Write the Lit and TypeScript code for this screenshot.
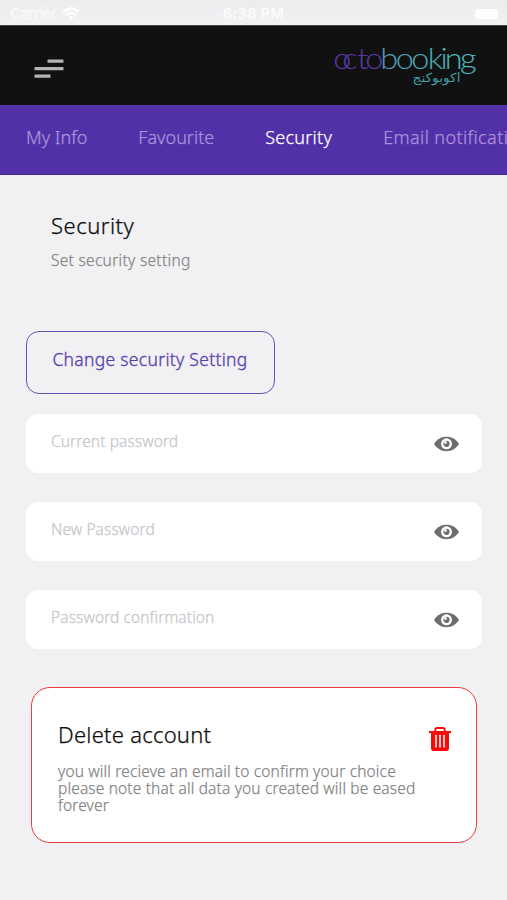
import { LitElement, html, css } from "lit";
import { customElement, property } from "lit/decorators.js";
import { classMap } from "lit/directives/class-map.js";

@customElement("status-bar")
class StatusBar extends LitElement {
  static styles = css`
    :host { display: grid; grid-template-columns: 1fr auto 1fr; align-items: center; box-sizing: border-box;
      height: 25px; padding: 3px 10px 0; background: linear-gradient(#ececee, #f2f2f4); color: #fbfbfc;
      font: 15px/20px "Inter", sans-serif; }
    .carrier { display: flex; align-items: center; gap: 6px; }
    .carrier span { letter-spacing: -0.4px; }
    .time { font-weight: 600; letter-spacing: 0.1px; }
    .battery { justify-self: end; width: 23px; height: 10px; margin-right: -1px; border-radius: 3px; background: #fff; }
    svg { display: block; }
  `;
  render() {
    return html`
      <div class="carrier"><span>Carrier</span>
        <svg width="18" height="14" viewBox="0 0 18 14" fill="none" stroke="#fff" stroke-width="2.6">
          <path d="M1 5 Q9 -2 17 5" /><path d="M4 8 Q9 4 14 8" /><path d="M6.5 10 Q9 8 11.5 10 L9 13Z" fill="#fff" stroke="none" />
        </svg>
      </div>
      <span class="time">6:38 PM</span>
      <span class="battery"></span>`;
  }
}

@customElement("brand-logo")
class BrandLogo extends LitElement {
  static styles = css`
    :host { display: block; }
    svg { display: block; overflow: visible; }
    .latin { font: 300 29px "Lato", sans-serif; }
    .arabic { font: 12.5px "DejaVu Sans", sans-serif; }
    .violet { fill: #5a38a6; }
    .teal { fill: #3f9ea5; }
    .sea { fill: url(#sea); }
  `;
  render() {
    return html`<svg width="144" height="40" viewBox="0 0 144 40">
      <defs><linearGradient id="sea" x1="0" x2="1"><stop stop-color="#5792b4" /><stop offset="0.4" stop-color="#45a9b0" /><stop offset="1" stop-color="#50bfc4" /></linearGradient></defs>
      <g transform="translate(0 23) scale(1.12 1.02)">
        <text class="latin violet" x="-0.7 7.4 20.8 28" y="0">octo</text>
        <text class="latin sea" x="41.2 55.2 69 83.6 95.2 99 112.6" y="0">booking</text>
      </g>
      <text class="arabic teal" x="78.5" y="35.5" textLength="48" lengthAdjust="spacingAndGlyphs">اكوبوكنج</text>
    </svg>`;
  }
}

@customElement("password-field")
class PasswordField extends LitElement {
  @property() label = "";
  static styles = css`
    :host { display: flex; align-items: center; justify-content: space-between; box-sizing: border-box; height: 59px;
      padding: 0 23px 0 25px; border-radius: 12px; background: #fff; color: #c3c7ca; }
    .label { font-size: 15.5px; line-height: 20px; padding-bottom: 5px; letter-spacing: 0.1px; }
    svg { display: block; }
  `;
  render() {
    return html`<span class="label">${this.label}</span>
      <svg width="25" height="16" viewBox="0 0 25 16">
        <path d="M0 8C3 3.3 7.3.8 12.5.8S22 3.3 25 8c-3 4.7-7.3 7.2-12.5 7.2S3 12.7 0 8Z" fill="#6d6d6d" />
        <circle cx="12.5" cy="7.8" r="5.5" fill="#fff" /><circle cx="12.5" cy="7.8" r="3.1" fill="#6d6d6d" /><circle cx="11.4" cy="6.5" r="1.4" fill="#fff" />
      </svg>`;
  }
}

const tabs = [
  { name: "My Info", key: "info" },
  { name: "Favourite", key: "favourite" },
  { name: "Security", key: "security" },
  { name: "Email notification", key: "email" },
];

@customElement("app-root")
class AppRoot extends LitElement {
  static styles = css`
    :host { display: block; box-sizing: border-box; height: 900px; overflow: hidden; background: #f1f1f4;
      font-family: "Noto Sans", "Open Sans", sans-serif; font-weight: 300; -webkit-text-stroke: 0.25px currentColor; }
    .header { display: flex; align-items: center; justify-content: space-between; box-sizing: border-box; height: 80px;
      padding: 0 29px 0 34px; background: #111; border-top: 1px solid #444; }
    .header, status-bar { -webkit-text-stroke: 0; }
    .menu { display: block; padding-top: 6px; }
    .tabs { display: flex; gap: 51px; height: 70px; padding-left: 26px; box-sizing: border-box; background: #5230a7;
      border-bottom: 1px solid #46278f; overflow: hidden; }
    .tab { flex: none; padding-top: 19px; font-size: 18px; line-height: 26px; color: #ab93dc; white-space: nowrap; }
    .tab.active { color: #fff; }
    .tab.security { letter-spacing: 0.25px; }
    .tab.email { letter-spacing: 0.4px; }
    .intro { padding: 36px 51px 0; }
    h2 { margin: 0; font-weight: 300; font-size: 22px; line-height: 28px; letter-spacing: 0.25px; color: #0c0c0c; }
    .intro h2 { letter-spacing: 0.5px; }
    p { margin: 0; color: #858585; }
    .sub { padding-top: 10px; font-size: 15.5px; line-height: 22px; letter-spacing: 0.3px; }
    .change { display: block; box-sizing: border-box; width: 249px; height: 63px; margin: 60px 0 0 26px; padding: 0 1px 7px 0;
      border: 1.5px solid #6650b5; border-radius: 13px; background: transparent; color: #5a42ae;
      font: 300 17.5px "Noto Sans", sans-serif; letter-spacing: 0.3px; -webkit-text-stroke: 0.35px currentColor; }
    .fields { display: grid; gap: 29px; margin: 20px 25px 0 26px; }
    .delete { display: flex; justify-content: space-between; box-sizing: border-box; width: 446px; height: 156px;
      margin: 38px 0 0 31px; padding: 32px 25px 0 26px; border: 1.5px solid #e83c40; border-radius: 19px; background: #fff; }
    .note { padding-top: 15px; font-size: 15.5px; line-height: 17px; letter-spacing: 0.15px; white-space: pre-line; }
    .trash { flex: none; margin-top: 7px; }
  `;
  render() {
    return html`
      <status-bar></status-bar>
      <header class="header">
        <svg class="menu" width="30" height="20" viewBox="0 0 30 20" fill="#b4b4b4">
          <rect x="13.5" y="0.5" width="16" height="3.2" rx="0.5" /><rect x="0.5" y="8" width="29" height="3.2" rx="0.5" /><rect x="0.5" y="15.5" width="16" height="3.2" rx="0.5" />
        </svg>
        <brand-logo></brand-logo>
      </header>
      <nav class="tabs">
        ${tabs.map((t) => html`<span class=${classMap({ tab: true, [t.key]: true, active: t.key === "security" })}>${t.name}</span>`)}
      </nav>
      <section class="intro">
        <h2>Security</h2>
        <p class="sub">Set security setting</p>
      </section>
      <button class="change">Change security Setting</button>
      <div class="fields">
        <password-field label="Current password"></password-field>
        <password-field label="New Password"></password-field>
        <password-field label="Password confirmation"></password-field>
      </div>
      <section class="delete">
        <div>
          <h2>Delete account</h2>
          <p class="note">you will recieve an email to confirm your choice
please note that all data you created will be eased
forever</p>
        </div>
        <svg class="trash" width="22" height="24" viewBox="0 0 22 24">
          <path d="M6.3 4.5V2.7Q6.3 1 8 1H14Q15.7 1 15.7 2.7V4.5" fill="none" stroke="#f90a0a" stroke-width="1.9" />
          <path d="M0 4H22V6H20V21Q20 24 17.5 24H4.5Q2 24 2 21V6H0Z" fill="#f90a0a" />
          <path d="M7 8V20.5M11 8V20.5M15 8V20.5" stroke="#fff" stroke-width="1.5" />
        </svg>
      </section>`;
  }
}
